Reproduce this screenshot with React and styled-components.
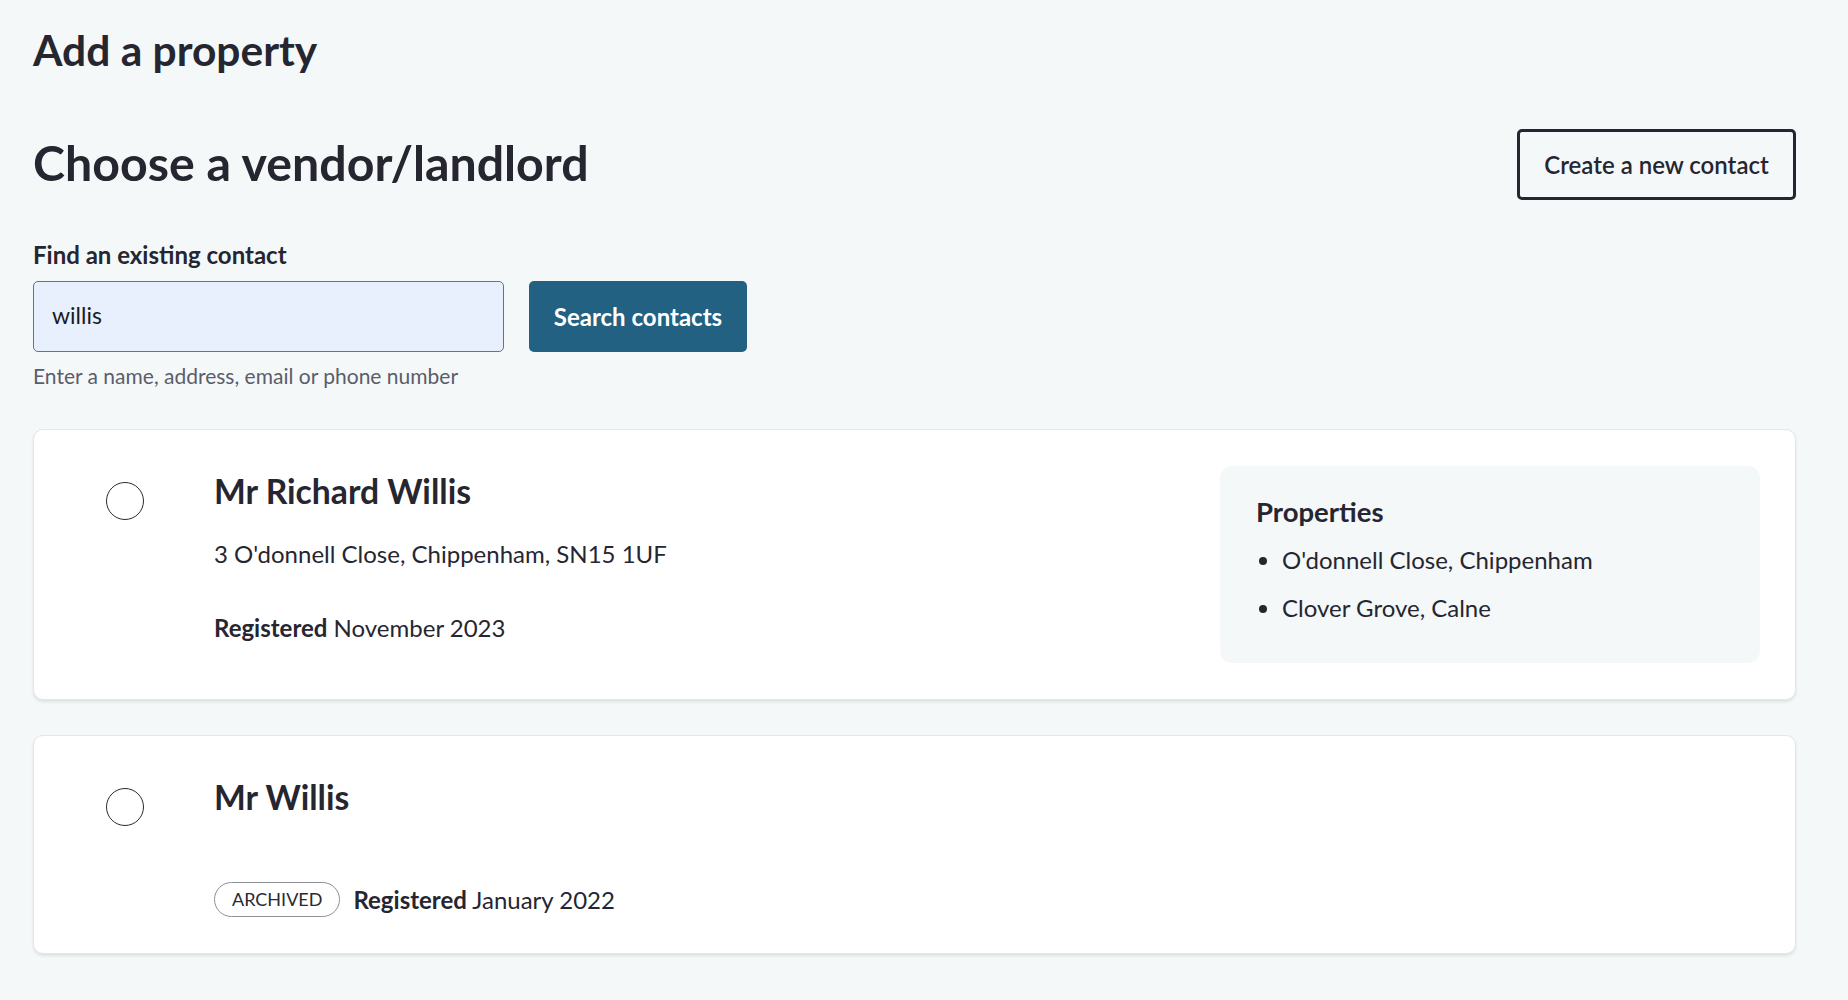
import React from "react";
import styled, { createGlobalStyle } from "styled-components";

const GlobalStyle = createGlobalStyle`
  html, body { margin: 0; padding: 0; background: #f5f8f9; }
  body { font-family: Lato, "Open Sans", sans-serif; color: #262630; }
  * { box-sizing: border-box; }
`;

const Page = styled.main`
  padding: 25px 52px 40px 33px;
  min-height: 1000px;
`;

const Title = styled.h1`
  margin: 0;
  font-size: 42.5px;
  line-height: 50px;
  font-weight: 700;
`;

const HeaderRow = styled.div`
  display: flex;
  align-items: center;
  justify-content: space-between;
  margin-top: 54px;
`;

const Heading = styled.h2`
  margin: 0;
  padding-bottom: 5px;
  font-size: 48.3px;
  line-height: 58px;
  font-weight: 700;
`;

const OutlineButton = styled.button`
  height: 71px;
  width: 279px;
  border: 3px solid #262630;
  border-radius: 5px;
  background: transparent;
  color: #262630;
  font-family: inherit;
  font-size: 24px;
  font-weight: 600;
`;

const Field = styled.div`
  margin-top: 40px;
`;

const Label = styled.label`
  display: block;
  font-size: 24px;
  line-height: 30px;
  font-weight: 700;
`;

const SearchRow = styled.div`
  display: flex;
  gap: 25px;
  margin-top: 11px;
`;

const Input = styled.input`
  width: 471px;
  height: 71px;
  padding: 0 18px 3px;
  border: 1px solid #6e707c;
  border-radius: 5px;
  background: #e8f0fe;
  color: #1a1a22;
  font-family: inherit;
  font-size: 23px;
  outline: none;
`;

const PrimaryButton = styled.button`
  height: 71px;
  width: 218px;
  border: none;
  border-radius: 5px;
  background: #236182;
  color: #fff;
  font-family: inherit;
  font-size: 24px;
  font-weight: 700;
`;

const Hint = styled.p`
  margin: 9px 0 0;
  font-size: 21px;
  line-height: 30px;
  color: #5b5d69;
`;

const Results = styled.div`
  display: flex;
  flex-direction: column;
  gap: 35px;
  margin-top: 38px;
`;

const Card = styled.div`
  display: flex;
  align-items: flex-start;
  background: #fff;
  border: 1px solid #e3e6ea;
  border-radius: 10px;
  box-shadow: 0 2px 3px rgba(0, 0, 0, 0.09);
  padding: 36px 35px 36px 72px;
`;

const Radio = styled.span`
  flex: none;
  width: 38px;
  height: 38px;
  margin-top: 16px;
  border: 1.5px solid #2a2a33;
  border-radius: 50%;
`;

const Info = styled.div`
  flex: 1;
  margin-left: 70px;
  padding-top: 5px;
`;

const Name = styled.h3`
  margin: 0;
  font-size: 33.7px;
  line-height: 40px;
  font-weight: 700;
`;

const Address = styled.p`
  margin: 26px 0 0;
  font-size: 24px;
  line-height: 33px;
`;

const Meta = styled.div`
  display: flex;
  align-items: center;
  gap: 13px;
  margin-top: ${(p) => p.$gap}px;
  font-size: 24px;
  line-height: 35px;
`;

const Strong = styled.strong`
  font-weight: 700;
`;

const Badge = styled.span`
  display: inline-flex;
  align-items: center;
  height: 35px;
  padding: 0 17px;
  border: 1px solid #8e9096;
  border-radius: 18px;
  font-size: 18px;
  text-transform: uppercase;
  color: #2a2a33;
`;

const PropertiesBox = styled.div`
  width: 540px;
  min-height: 197px;
  background: #f5f8f9;
  border-radius: 12px;
  padding: 30px 36px 24px;
`;

const BoxTitle = styled.h4`
  margin: 0;
  font-size: 27.5px;
  line-height: 32px;
  font-weight: 700;
`;

const List = styled.ul`
  margin: 8px 0 0;
  padding: 0 0 0 26px;
  font-size: 24px;
  line-height: 48px;
`;

export default function App() {
  return (
    <>
      <GlobalStyle />
      <Page>
        <Title>Add a property</Title>
        <HeaderRow>
          <Heading>Choose a vendor/landlord</Heading>
          <OutlineButton>Create a new contact</OutlineButton>
        </HeaderRow>
        <Field>
          <Label>Find an existing contact</Label>
          <SearchRow>
            <Input defaultValue="willis" />
            <PrimaryButton>Search contacts</PrimaryButton>
          </SearchRow>
          <Hint>Enter a name, address, email or phone number</Hint>
        </Field>
        <Results>
          <Card>
            <Radio />
            <Info>
              <Name>Mr Richard Willis</Name>
              <Address>3 O'donnell Close, Chippenham, SN15 1UF</Address>
              <Meta $gap={40}>
                <span><Strong>Registered</Strong> November 2023</span>
              </Meta>
            </Info>
            <PropertiesBox>
              <BoxTitle>Properties</BoxTitle>
              <List>
                <li>O'donnell Close, Chippenham</li>
                <li>Clover Grove, Calne</li>
              </List>
            </PropertiesBox>
          </Card>
          <Card>
            <Radio />
            <Info>
              <Name>Mr Willis</Name>
              <Meta $gap={65}>
                <Badge>Archived</Badge>
                <span><Strong>Registered</Strong> January 2022</span>
              </Meta>
            </Info>
          </Card>
        </Results>
      </Page>
    </>
  );
}
